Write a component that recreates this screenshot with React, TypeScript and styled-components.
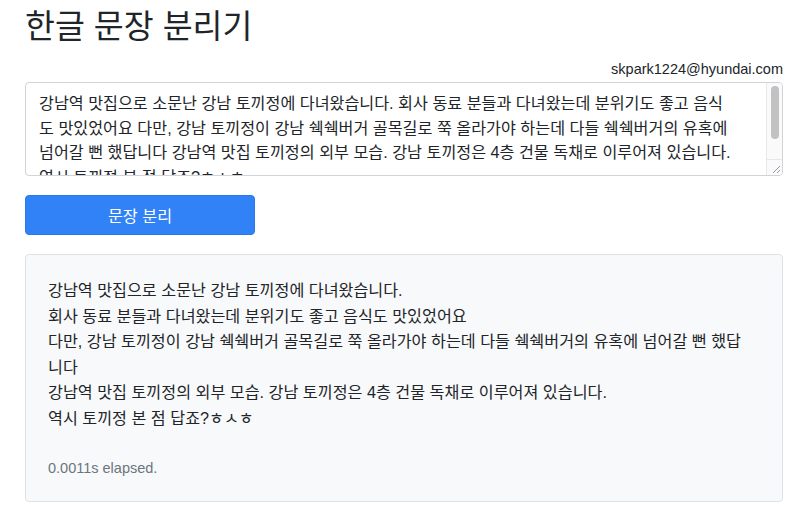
import React from "react";
import styled, { createGlobalStyle } from "styled-components";

const GlobalStyle = createGlobalStyle`
  html, body {
    margin: 0;
    padding: 0;
    background: #ffffff;
  }
  body {
    font-family: "Liberation Sans", "Noto Sans CJK KR", sans-serif;
    color: #212529;
  }
`;

const Page = styled.div`
  display: flex;
  flex-direction: column;
  padding: 0 17px 14px 25px;
`;

const Title = styled.h1`
  margin: 6px 0 0;
  height: 48px;
  font-size: 32.5px;
  font-weight: 400;
  line-height: 42px;
  color: #212529;
`;

const UserLine = styled.div`
  display: flex;
  justify-content: flex-end;
  font-size: 14.5px;
  line-height: 17px;
  height: 24px;
  padding-top: 7px;
  box-sizing: border-box;
  margin-bottom: 4px;
  color: #212529;
`;

const InputFrame = styled.div`
  display: flex;
  box-sizing: border-box;
  height: 94px;
  border: 1px solid #ced4da;
  border-radius: 4px;
  overflow: hidden;
  background: #ffffff;
`;

const TextInput = styled.textarea`
  flex: 1;
  min-width: 0;
  box-sizing: border-box;
  height: 100%;
  margin: 0;
  padding: 8px 28.5px 8px 13px;
  border: none;
  font-family: inherit;
  font-size: 16.2px;
  line-height: 24.5px;
  color: #212529;
  background: transparent;
  resize: none;
  outline: none;
  overflow: hidden;
`;

const ScrollTrack = styled.div`
  display: flex;
  flex-direction: column;
  flex: 0 0 16px;
  box-sizing: border-box;
  background: #fafafa;
  border-left: 1px solid #e8e8e8;
`;

const ScrollThumb = styled.div`
  width: 8px;
  height: 53px;
  margin: 3px 0 0 4px;
  border-radius: 4px;
  background: #c2c2c2;
`;

const ResizeCorner = styled.div`
  margin-top: auto;
  height: 15px;
  border-top: 1px solid #e8e8e8;
  display: flex;
  align-items: flex-end;
  justify-content: flex-end;
`;

const SplitButton = styled.button`
  margin-top: 19px;
  width: 230px;
  height: 40px;
  border: 1px solid #2a78ec;
  border-radius: 4px;
  background: #3182f6;
  color: #ffffff;
  font-family: inherit;
  font-size: 16.2px;
  cursor: pointer;
`;

const ResultBox = styled.div`
  margin-top: 19px;
  box-sizing: border-box;
  height: 248px;
  padding: 23px 28px 24px 22px;
  background: #f8f9fa;
  border: 1px solid #dee2e6;
  border-radius: 4px;
`;

const Sentence = styled.div`
  font-size: 16.2px;
  line-height: 25.6px;
  color: #212529;
`;

const Elapsed = styled.div`
  margin-top: 26px;
  font-size: 14.5px;
  line-height: 20px;
  color: #6c757d;
`;

const inputText =
  "강남역 맛집으로 소문난 강남 토끼정에 다녀왔습니다. 회사 동료 분들과 다녀왔는데 분위기도 좋고 음식도 맛있었어요 다만, 강남 토끼정이 강남 쉑쉑버거 골목길로 쭉 올라가야 하는데 다들 쉑쉑버거의 유혹에 넘어갈 뻔 했답니다 강남역 맛집 토끼정의 외부 모습. 강남 토끼정은 4층 건물 독채로 이루어져 있습니다. 역시 토끼정 본 점 답죠?ㅎㅅㅎ";

const sentences = [
  "강남역 맛집으로 소문난 강남 토끼정에 다녀왔습니다.",
  "회사 동료 분들과 다녀왔는데 분위기도 좋고 음식도 맛있었어요",
  "다만, 강남 토끼정이 강남 쉑쉑버거 골목길로 쭉 올라가야 하는데 다들 쉑쉑버거의 유혹에 넘어갈 뻔 했답니다",
  "강남역 맛집 토끼정의 외부 모습. 강남 토끼정은 4층 건물 독채로 이루어져 있습니다.",
  "역시 토끼정 본 점 답죠?ㅎㅅㅎ",
];

export default function App() {
  return (
    <>
      <GlobalStyle />
      <Page>
        <Title>한글 문장 분리기</Title>
        <UserLine>skpark1224@hyundai.com</UserLine>
        <InputFrame>
          <TextInput defaultValue={inputText} />
          <ScrollTrack>
            <ScrollThumb />
            <ResizeCorner>
              <svg width="14" height="14" viewBox="0 0 14 14">
                <path d="M12 5 L5 12 M12 9 L9 12" stroke="#9a9a9a" strokeWidth="1" fill="none" />
              </svg>
            </ResizeCorner>
          </ScrollTrack>
        </InputFrame>
        <SplitButton>문장 분리</SplitButton>
        <ResultBox>
          {sentences.map((s, i) => (
            <Sentence key={i}>{s}</Sentence>
          ))}
          <Elapsed>0.0011s elapsed.</Elapsed>
        </ResultBox>
      </Page>
    </>
  );
}
